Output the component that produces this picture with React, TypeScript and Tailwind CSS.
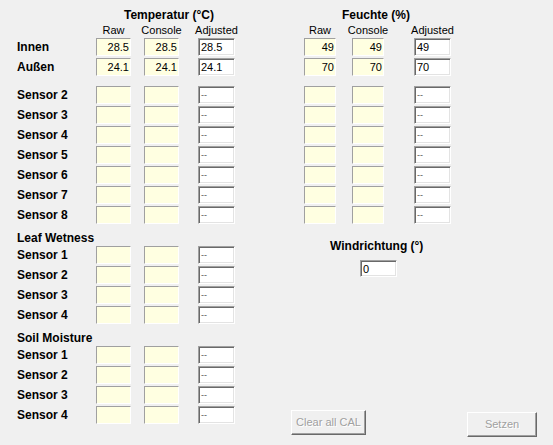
import React from 'react';

const font = "font-['Liberation_Sans',Arial,sans-serif]";

// read-only yellow field (Raw / Console)
const RoBox: React.FC<{ w: string; value?: string }> = ({ w, value }) => (
  <div
    className={`${w} h-[18px] shrink-0 flex items-center justify-end bg-[#ffffe1] border border-t-[#a0a0a0] border-l-[#a0a0a0] border-r-white border-b-white text-[11px] leading-none pr-[1px] text-black`}
  >
    {value}
  </div>
);

// sunken white edit field
const EditBox: React.FC<{ value?: string; h?: string }> = ({ value = '--', h = 'h-[18px]' }) => {
  const dash = value === '--';
  return (
    <div
      className={`w-[37px] ${h} shrink-0 flex items-center bg-white border border-t-[#a0a0a0] border-l-[#a0a0a0] border-r-white border-b-white shadow-[inset_1px_1px_0_#696969,inset_-1px_-1px_0_#e3e3e3] pl-[2px] pt-[1px] overflow-hidden`}
    >
      <span className={dash ? 'text-[9px] leading-none text-[#555]' : 'text-[11px] leading-none text-black'}>{value}</span>
    </div>
  );
};

interface Row {
  label: string;
  t?: [string, string, string];
  h?: [string, string, string];
}

const FullRow: React.FC<Row> = ({ label, t, h }) => (
  <div className="flex items-center h-[20px]">
    <div className="w-[79px] shrink-0 text-[12px] font-bold leading-[14px]">{label}</div>
    <RoBox w="w-[35px]" value={t?.[0]} />
    <div className="w-[13px] shrink-0" />
    <RoBox w="w-[35px]" value={t?.[1]} />
    <div className="w-[19px] shrink-0" />
    <EditBox value={t?.[2]} />
    <div className="w-[69px] shrink-0" />
    <RoBox w="w-[32px]" value={h?.[0]} />
    <div className="w-[16px] shrink-0" />
    <RoBox w="w-[32px]" value={h?.[1]} />
    <div className="w-[30px] shrink-0" />
    <EditBox value={h?.[2]} />
  </div>
);

const LeftRow: React.FC<{ label: string }> = ({ label }) => (
  <div className="flex items-center h-[20px]">
    <div className="w-[79px] shrink-0 text-[12px] font-bold leading-[14px]">{label}</div>
    <RoBox w="w-[35px]" />
    <div className="w-[13px] shrink-0" />
    <RoBox w="w-[35px]" />
    <div className="w-[19px] shrink-0" />
    <EditBox />
  </div>
);

const SubHead: React.FC<{ w: string; text: string }> = ({ w, text }) => (
  <div className={`${w} shrink-0 flex justify-center whitespace-nowrap`}>{text}</div>
);

const Button: React.FC<{ label: string; w: string }> = ({ label, w }) => (
  <div
    className={`${w} h-[25px] shrink-0 flex items-center justify-center bg-[#f0f0f0] border border-t-white border-l-white border-r-[#696969] border-b-[#696969] shadow-[inset_-1px_-1px_0_#a0a0a0] text-[11px] text-[#a0a0a0] [text-shadow:1px_1px_0_#fff]`}
  >
    {label}
  </div>
);

export default function App() {
  const sensors = ['Sensor 2', 'Sensor 3', 'Sensor 4', 'Sensor 5', 'Sensor 6', 'Sensor 7', 'Sensor 8'];
  const four = ['Sensor 1', 'Sensor 2', 'Sensor 3', 'Sensor 4'];

  return (
    <div className={`${font} w-[553px] h-[445px] bg-[#f0f0f0] text-black pl-[17px] overflow-hidden`}>
      {/* titles */}
      <div className="flex mt-[8px] h-[14px] text-[12px] font-bold leading-[14px]">
        <div className="w-[79px] shrink-0" />
        <div className="w-[139px] shrink-0 pl-[28px] whitespace-nowrap">Temperatur (°C)</div>
        <div className="w-[69px] shrink-0" />
        <div className="pl-[38px] whitespace-nowrap">Feuchte (%)</div>
      </div>
      <div className="flex h-[15px] text-[11px] leading-[14px] pt-[1px]">
        <div className="w-[79px] shrink-0" />
        <SubHead w="w-[35px]" text="Raw" />
        <div className="w-[13px] shrink-0" />
        <SubHead w="w-[35px]" text="Console" />
        <div className="w-[19px] shrink-0" />
        <SubHead w="w-[37px]" text="Adjusted" />
        <div className="w-[69px] shrink-0" />
        <SubHead w="w-[32px]" text="Raw" />
        <div className="w-[16px] shrink-0" />
        <SubHead w="w-[32px]" text="Console" />
        <div className="w-[30px] shrink-0" />
        <SubHead w="w-[37px]" text="Adjusted" />
      </div>

      <FullRow label="Innen" t={['28.5', '28.5', '28.5']} h={['49', '49', '49']} />
      <FullRow label="Außen" t={['24.1', '24.1', '24.1']} h={['70', '70', '70']} />
      <div className="h-[8px]" />
      {sensors.map((s) => (
        <FullRow key={s} label={s} h={['', '', '--']} t={['', '', '--']} />
      ))}

      <div className="flex">
        {/* leaf wetness + soil moisture */}
        <div className="flex flex-col w-[218px] shrink-0">
          <div className="h-[20px] flex items-end text-[12px] font-bold leading-[14px]">Leaf Wetness</div>
          {four.map((s) => (
            <LeftRow key={'l' + s} label={s} />
          ))}
          <div className="h-[20px] flex items-end text-[12px] font-bold leading-[14px]">Soil Moisture</div>
          {four.map((s) => (
            <LeftRow key={'s' + s} label={s} />
          ))}
        </div>

        {/* wind direction + buttons */}
        <div className="flex flex-col">
          <div className="mt-[14px] ml-[95px] h-[14px] text-[12px] font-bold leading-[14px] whitespace-nowrap">
            Windrichtung (°)
          </div>
          <div className="mt-[7px] ml-[125px]">
            <EditBox value="0" h="h-[17px]" />
          </div>
          <div className="flex items-start mt-[133px]">
            <div className="ml-[56px]">
              <Button label="Clear all CAL" w="w-[75px]" />
            </div>
            <div className="ml-[101px] mt-[2px]">
              <Button label="Setzen" w="w-[70px]" />
            </div>
          </div>
        </div>
      </div>
    </div>
  );
}
